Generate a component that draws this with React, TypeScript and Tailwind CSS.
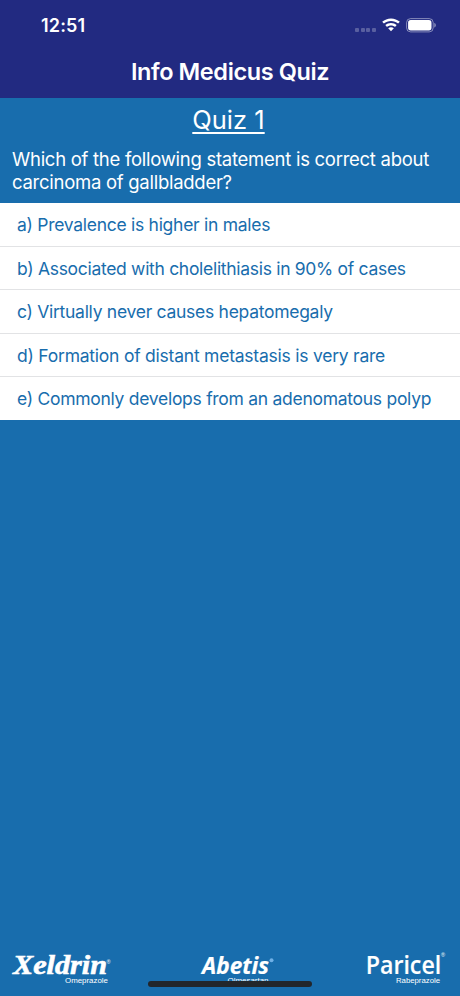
const answers = [
  { text: 'a) Prevalence is higher in males', row: 'h-[44px]', spacing: 'tracking-[-0.28px]' },
  { text: 'b) Associated with cholelithiasis in 90% of cases', row: 'h-[43px]', spacing: 'tracking-[-0.3px]' },
  { text: 'c) Virtually never causes hepatomegaly', row: 'h-[44px]', spacing: 'tracking-[-0.28px]' },
  { text: 'd) Formation of distant metastasis is very rare', row: 'h-[43px]', spacing: 'tracking-[-0.23px]' },
  { text: 'e) Commonly develops from an adenomatous polyp', row: 'h-[43px]', spacing: 'tracking-[-0.28px]' },
]

function WifiIcon() {
  return (
    <svg width="18" height="14" viewBox="0 0 18 14" fill="white">
      <path d="M9 0.4C12.4 0.4 15.5 1.7 17.8 3.8L16.1 5.6C14.2 3.9 11.7 2.9 9 2.9S3.8 3.9 1.9 5.6L0.2 3.8C2.5 1.7 5.6 0.4 9 0.4Z" />
      <path d="M9 4.9C11.2 4.9 13.2 5.7 14.7 7.1L13 8.9C11.9 7.9 10.5 7.4 9 7.4S6.1 7.9 5 8.9L3.3 7.1C4.8 5.7 6.8 4.9 9 4.9Z" />
      <path d="M9 9.2C10.1 9.2 11 9.6 11.8 10.2L9 13.3L6.2 10.2C7 9.6 7.9 9.2 9 9.2Z" />
    </svg>
  )
}

function BatteryIcon() {
  return (
    <svg width="31" height="15" viewBox="0 0 31 15" fill="none">
      <rect x="0.6" y="0.6" width="26.6" height="13.3" rx="4" stroke="white" strokeOpacity="0.45" />
      <rect x="2.1" y="2.1" width="23.4" height="10.3" rx="2.6" fill="white" />
      <path d="M28.3 5C29.3 5.3 29.8 6.2 29.8 7.2S29.3 9.1 28.3 9.5Z" fill="white" fillOpacity="0.5" />
    </svg>
  )
}

function StatusBar() {
  return (
    <div className="flex h-[50px] items-center justify-between pl-[41px] pr-[23px]">
      <span className="pt-[2px] text-[18px] font-semibold leading-none tracking-[0.15px]">12:51</span>
      <div className="flex items-center">
        <div className="mr-[6px] mt-[10px] flex gap-[1.7px]">
          {[0, 1, 2, 3].map((dot) => (
            <span key={dot} className="size-[4px] rounded-[1px] bg-white/25" />
          ))}
        </div>
        <WifiIcon />
        <span className="ml-[6px]">
          <BatteryIcon />
        </span>
      </div>
    </div>
  )
}

function XeldrinLogo() {
  return (
    <svg className="overflow-visible" width="104" height="46" viewBox="0 0 104 46" fill="white">
      <text x="4" y="24" textLength="94" lengthAdjust="spacingAndGlyphs" fontFamily="Liberation Serif, serif" fontSize="26.5" fontWeight="700" fontStyle="italic" stroke="white" strokeWidth="0.6">Xeldrin</text>
      <text x="97.5" y="14" fontFamily="Liberation Sans, sans-serif" fontSize="5.5">®</text>
      <text x="56" y="32.7" textLength="43" lengthAdjust="spacingAndGlyphs" fontFamily="Liberation Sans, sans-serif" fontSize="8">Omeprazole</text>
    </svg>
  )
}

function AbetisLogo() {
  return (
    <svg className="overflow-visible" width="80" height="46" viewBox="0 0 80 46" fill="white">
      <text x="2" y="24" textLength="67" lengthAdjust="spacingAndGlyphs" fontFamily="Open Sans, sans-serif" fontSize="23.5" fontWeight="700" fontStyle="italic" stroke="white" strokeWidth="0.2">Abetis</text>
      <circle cx="71.5" cy="10.2" r="2" fill="#6fb0e6" />
      <text x="27.5" y="32.5" textLength="41" lengthAdjust="spacingAndGlyphs" fontFamily="Liberation Sans, sans-serif" fontSize="8">Olmesartan</text>
    </svg>
  )
}

function ParicelLogo() {
  return (
    <svg className="overflow-visible" width="84" height="46" viewBox="0 0 84 46" fill="white">
      <text x="-0.3" y="24" textLength="75.5" lengthAdjust="spacingAndGlyphs" fontFamily="Open Sans, sans-serif" fontSize="26" fontWeight="600" stroke="white" strokeWidth="0.15">Paricel</text>
      <text x="75" y="7" fontFamily="Liberation Sans, sans-serif" fontSize="5.5">®</text>
      <text x="30" y="32.5" textLength="44" lengthAdjust="spacingAndGlyphs" fontFamily="Liberation Sans, sans-serif" fontSize="8">Rabeprazole</text>
    </svg>
  )
}

export default function App() {
  return (
    <div className="relative flex h-[996px] w-[460px] flex-col bg-[#186dad] font-[Inter,sans-serif] text-white">
      {/* Header */}
      <header className="h-[98px] bg-[#222a81]">
        <StatusBar />
        <h1 className="text-center text-[23.5px] font-semibold leading-[44px] tracking-[-0.4px]">Info Medicus Quiz</h1>
      </header>

      {/* Question */}
      <section className="h-[105px]">
        <h2 className="pr-[3px] pt-1 text-center text-[25.5px] leading-9 underline decoration-[1.5px] underline-offset-[3px]">Quiz 1</h2>
        <p className="whitespace-nowrap pl-3 pt-[10px] text-[18.5px] leading-[23px] tracking-[-0.27px]">
          Which of the following statement is correct about
          <br />
          carcinoma of gallbladder?
        </p>
      </section>

      {/* Answers */}
      <ul className="bg-white text-[17.5px] text-[#186dad]">
        {answers.map((answer) => (
          <li key={answer.text} className={`flex items-center whitespace-nowrap border-b border-[#e2e3e5] pl-[17px] pt-[2px] last:border-b-0 ${answer.row}`}>
            <span className={answer.spacing}>{answer.text}</span>
          </li>
        ))}
      </ul>

      {/* Sponsors */}
      <footer className="mt-auto flex h-[46px] items-start justify-between pl-[9px] pr-[10px]">
        <XeldrinLogo />
        <AbetisLogo />
        <ParicelLogo />
      </footer>
      <div className="absolute bottom-[9px] left-[148px] h-[6px] w-[164px] rounded-full bg-[#22262b]" />
    </div>
  )
}
